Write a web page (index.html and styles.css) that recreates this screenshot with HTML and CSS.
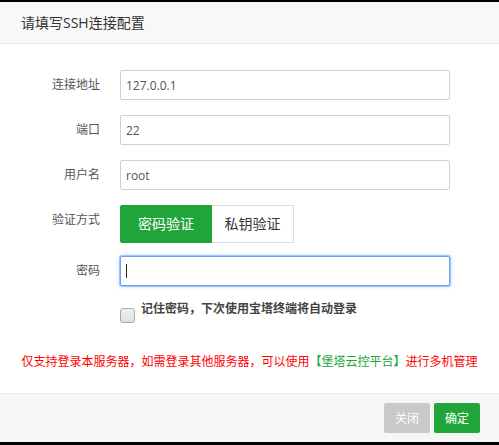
FILE: index.html
```html
<!DOCTYPE html>
<html lang="zh-CN">
<head>
<meta charset="utf-8">
<title>SSH</title>
<link rel="stylesheet" href="styles.css">
</head>
<body>
<div class="dialog">
  <div class="dialog-header">请填写SSH连接配置</div>
  <div class="dialog-body">
    <div class="row">
      <label class="label">连接地址</label>
      <input class="field" type="text" value="127.0.0.1">
    </div>
    <div class="row">
      <label class="label">端口</label>
      <input class="field" type="text" value="22">
    </div>
    <div class="row">
      <label class="label">用户名</label>
      <input class="field" type="text" value="root">
    </div>
    <div class="row row-auth">
      <label class="label label-top">验证方式</label>
      <div class="tabs">
        <span class="tab tab-active">密码验证</span>
        <span class="tab">私钥验证</span>
      </div>
    </div>
    <div class="row row-pass">
      <label class="label">密码</label>
      <div class="field-wrap">
        <input class="field field-focus" type="password" value="">
        <span class="caret"></span>
      </div>
    </div>
    <div class="check-row">
      <span class="checkbox"></span>
      <span class="check-text">记住密码，下次使用宝塔终端将自动登录</span>
    </div>
    <p class="notice">仅支持登录本服务器，如需登录其他服务器，可以使用<span class="notice-link">【堡塔云控平台】</span>进行多机管理</p>
  </div>
  <div class="dialog-footer">
    <button class="btn btn-close">关闭</button>
    <button class="btn btn-ok">确定</button>
  </div>
</div>
</body>
</html>
```
FILE: styles.css
```css
* { box-sizing: border-box; }
html, body { margin: 0; padding: 0; }
body {
  background: #000;
  font-family: "Open Sans", "Noto Sans CJK SC", sans-serif;
  width: 499px;
  height: 445px;
  overflow: hidden;
}
.dialog {
  margin-top: 2px;
  height: 440px;
  background: #fff;
  display: flex;
  flex-direction: column;
}
.dialog-header {
  height: 42px;
  background: #f8f8f8;
  border-bottom: 1px solid #ececec;
  padding-left: 21px;
  font-size: 14px;
  line-height: 42px;
  color: #333;
}
.dialog-body {
  flex: 1;
  padding-top: 26px;
}
.row {
  display: flex;
  align-items: center;
  margin-bottom: 15px;
}
.label {
  width: 100px;
  margin-right: 20px;
  text-align: right;
  font-size: 12px;
  line-height: 20px;
  color: #555;
}
.field {
  width: 330px;
  height: 30px;
  border: 1px solid #d0d0d0;
  border-radius: 2px;
  padding: 0 5px;
  font-family: inherit;
  font-size: 12px;
  color: #555;
  outline: none;
  background: #fff;
}
.row-auth {
  margin-top: 2px;
  margin-bottom: 13px;
  align-items: flex-start;
}
.label-top { margin-top: 5px; }
.tabs { display: flex; }
.tab {
  height: 38px;
  line-height: 36px;
  font-size: 14px;
  color: #333;
  border: 1px solid #ddd;
  border-left: none;
  padding: 0 0;
  width: 82px;
  text-align: center;
  background: #fff;
}
.tab-active {
  width: 92px;
  background: #20a53a;
  border: 1px solid #20a53a;
  color: #fff;
  border-radius: 2px 0 0 2px;
}
.row-pass { margin-bottom: 13px; }
.field-wrap { position: relative; }
.field-focus {
  border: 1px solid #6ba3f5;
  box-shadow: 0 0 0 1px rgba(107,163,245,0.55), 0 0 5px rgba(107,163,245,0.5);
}
.caret {
  position: absolute;
  left: 6px;
  top: 8px;
  width: 1px;
  height: 14px;
  background: #222;
}
.check-row {
  display: flex;
  align-items: flex-start;
  padding-left: 120px;
}
.checkbox {
  width: 15px;
  height: 15px;
  margin-top: 9px;
  border: 1px solid #aaa;
  border-radius: 3px;
  background: linear-gradient(#f0f0f0, #e0e0e0);
  margin-right: 6px;
  flex: none;
}
.check-text {
  font-size: 12px;
  line-height: 20px;
  font-weight: 700;
  color: #444;
}
.notice {
  margin: 29px 0 0;
  text-align: center;
  font-size: 12px;
  line-height: 20px;
  color: #ff0000;
}
.notice-link { color: #20a53a; }
.dialog-footer {
  height: 49px;
  border-top: 1px solid #e9e9e9;
  background: #f5f6f6;
  display: flex;
  justify-content: flex-end;
  align-items: flex-start;
  gap: 4px;
  padding: 9px 19px 0 0;
}
.btn {
  width: 46px;
  height: 30px;
  border: none;
  border-radius: 2px;
  font-family: inherit;
  font-size: 12px;
  color: #fff;
  padding: 0;
}
.btn-close { background: #c9c9c9; }
.btn-ok { background: #20a53a; }
```
